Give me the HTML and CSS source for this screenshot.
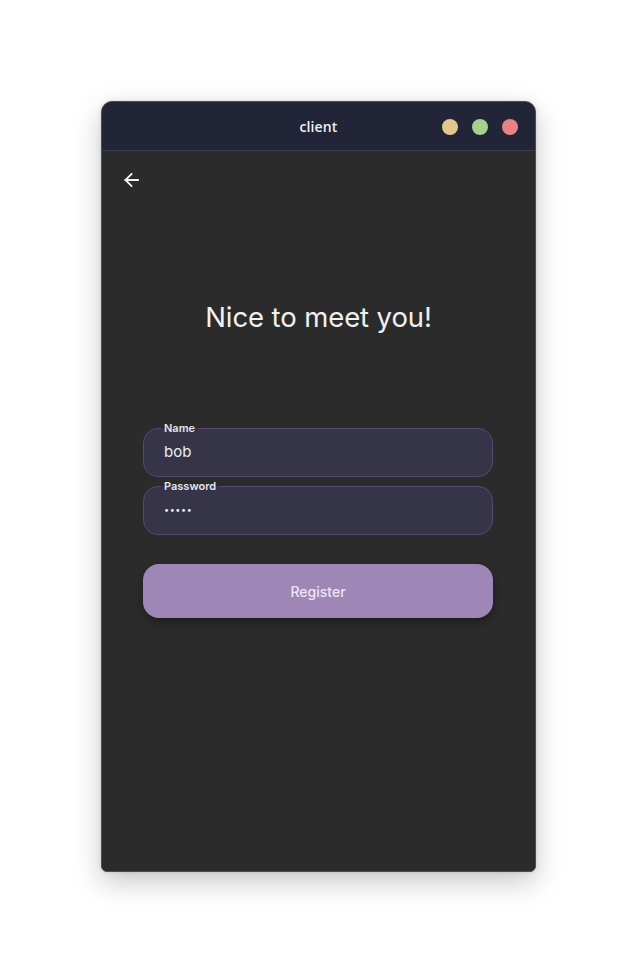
FILE: index.html
```html
<!DOCTYPE html>
<html lang="en">
<head>
<meta charset="utf-8">
<title>client</title>
<link rel="stylesheet" href="styles.css">
</head>
<body>
<div class="page">
  <div class="window">
    <header class="titlebar">
      <span class="title">client</span>
      <div class="controls">
        <span class="dot dot-min"></span>
        <span class="dot dot-max"></span>
        <span class="dot dot-close"></span>
      </div>
    </header>
    <main class="content">
      <button class="back" aria-label="Back">
        <svg width="16" height="16" viewBox="0 0 16 16" fill="none" stroke="#f2f2f2" stroke-width="1.8" stroke-linecap="square">
          <path d="M2.5 8H15"/>
          <path d="M8.5 2L2.5 8L8.5 14"/>
        </svg>
      </button>
      <h1 class="heading">Nice to meet you!</h1>
      <form class="form">
        <fieldset class="field">
          <legend class="field-label">Name</legend>
          <input class="field-input" type="text" value="bob">
        </fieldset>
        <fieldset class="field field-second">
          <legend class="field-label">Password</legend>
          <input class="field-input field-password" type="password" value="bobby">
        </fieldset>
        <button type="button" class="register">Register</button>
      </form>
    </main>
  </div>
</div>
</body>
</html>
```
FILE: styles.css
```css
* { box-sizing: border-box; }
html, body { margin: 0; padding: 0; background: #ffffff; }
.page {
  width: 637px;
  height: 974px;
  padding-top: 101px;
  padding-left: 101px;
}
.window {
  width: 435px;
  height: 771px;
  background: #2b2b2b;
  border: 1px solid #4b4d5a;
  border-radius: 11px 11px 6px 6px;
  overflow: hidden;
  box-shadow: 0 10px 28px rgba(0,0,0,0.22), 0 0 4px rgba(0,0,0,0.12);
  display: flex;
  flex-direction: column;
}
.titlebar {
  height: 49px;
  flex: none;
  background: #222537;
  border-bottom: 1px solid #3a3d4e;
  display: flex;
  align-items: center;
  justify-content: center;
  position: relative;
}
.title {
  font-family: "Open Sans", "Noto Sans", sans-serif;
  font-weight: 600;
  font-size: 14px;
  color: #eef0f6;
  letter-spacing: 0.1px;
}
.controls {
  position: absolute;
  right: 17px;
  top: 17px;
  display: flex;
  gap: 14px;
}
.dot { width: 16px; height: 16px; border-radius: 50%; display: block; }
.dot-min { background: #e3c78d; }
.dot-max { background: #a5d28a; }
.dot-close { background: #e98383; }
.content {
  flex: 1;
  padding: 21px 0 0 21px;
  display: flex;
  flex-direction: column;
}
.back {
  width: 16px;
  height: 16px;
  padding: 0;
  border: 0;
  background: none;
  display: block;
  cursor: pointer;
}
.back svg { display: block; }
.heading {
  margin: 112px 21px 0 0;
  text-align: center;
  font-family: "Inter", "Open Sans", sans-serif;
  font-weight: 400;
  font-size: 27.5px;
  line-height: 34px;
  color: #f0f0f0;
  letter-spacing: -0.1px;
}
.form {
  margin: 88px 0 0 20px;
  width: 350px;
  display: flex;
  flex-direction: column;
}
.field {
  margin: 0;
  padding: 0 17px 7px 17px;
  border: 1px solid #544a6c;
  border-radius: 15px;
  background: #363448;
  min-inline-size: 0;
}
.field-second { margin-top: 3px; }
.field-label {
  padding: 0 3px;
  font-family: "Inter", "Open Sans", sans-serif;
  font-weight: 600;
  font-size: 11px;
  line-height: 13px;
  color: #e4e2ea;
}
.field-input {
  display: block;
  width: 100%;
  height: 34px;
  padding: 0 3px 2px;
  border: 0;
  outline: none;
  background: transparent;
  font-family: "Inter", "Open Sans", sans-serif;
  font-size: 15px;
  color: #ecebf0;
}
.field-password {
  font-size: 9px;
  letter-spacing: 0.6px;
}
.register {
  margin-top: 29px;
  height: 54px;
  width: 350px;
  border: 0;
  border-radius: 16px;
  background: #9e86b7;
  color: #ede6f2;
  font-family: "Inter", "Open Sans", sans-serif;
  font-weight: 500;
  font-size: 14px;
  box-shadow: 0 4px 9px rgba(0,0,0,0.35);
  cursor: pointer;
}
```
